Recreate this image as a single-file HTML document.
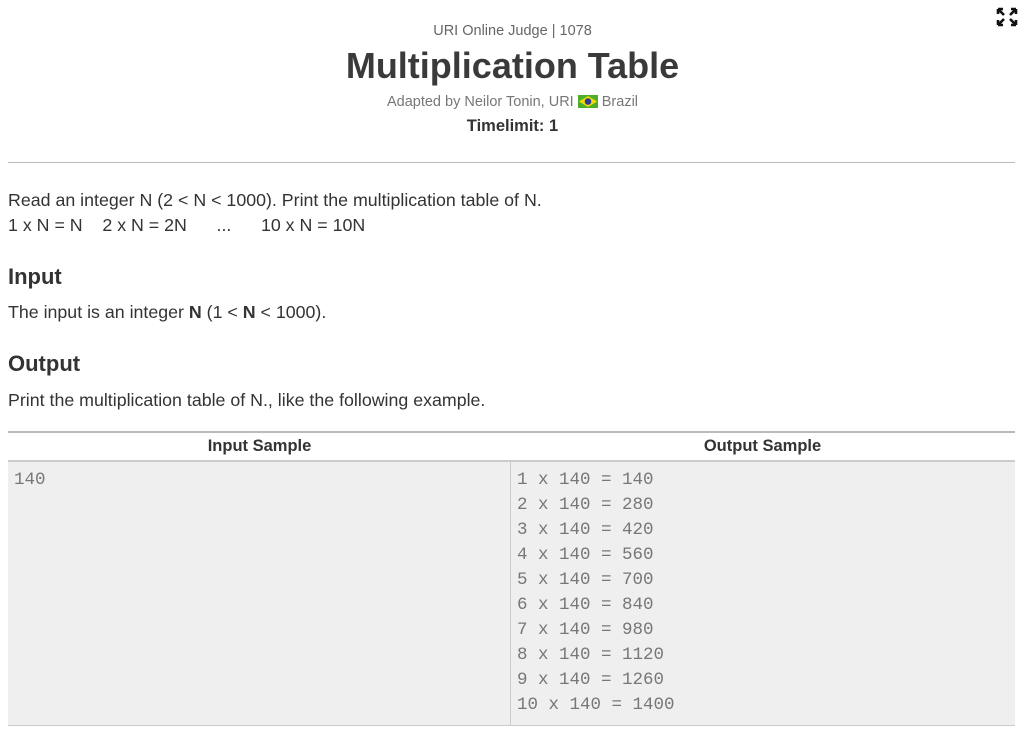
<!DOCTYPE html>
<html><head><meta charset="utf-8"><style>
body{margin:0;background:#fff;font-family:"Liberation Sans",sans-serif;color:#333;width:1025px;height:732px;overflow:hidden;position:relative}
.c{position:absolute;left:0;width:1025px;text-align:center}
.p{position:absolute;left:8px;font-size:17.8px;color:#333;white-space:pre}
h2{position:absolute;left:8px;margin:0;font-size:22px;font-weight:bold;color:#333}
.tbl{position:absolute;left:8px;top:431px;width:1007px;height:292px;border-top:2px solid #bbb;border-bottom:1px solid #ccc}
.hd{height:27px;border-bottom:2px solid #ccc;display:flex;font-weight:bold;font-size:16.5px;line-height:27px}
.hd div{width:503px;text-align:center}
.bd{display:flex;background:#efefef;height:263px}
.bd div{font-family:"Liberation Mono",monospace;font-size:17.5px;line-height:25px;color:#777;padding:6px 6px;white-space:pre;box-sizing:border-box}
</style></head><body>
<div class="c" style="top:23px;font-size:14.5px;color:#666">URI Online Judge | 1078</div>
<div class="c" style="top:45px;font-size:36px;font-weight:bold;color:#3a3a3a">Multiplication Table</div>
<div class="c" style="top:94px;font-size:14.5px;color:#777">Adapted by Neilor Tonin, URI <svg width="20" height="13" style="vertical-align:-2px"><rect width="20" height="13" fill="#4caf27"/><polygon points="10,1 19,6.5 10,12 1,6.5" fill="#f8d80c"/><circle cx="10" cy="6.5" r="3.3" fill="#2b3d8f"/></svg> Brazil</div>
<div class="c" style="top:117px;font-size:16.5px;font-weight:bold;color:#333">Timelimit: 1</div>
<svg style="position:absolute;left:996px;top:7px" width="22" height="20" viewBox="0 0 22 20"><g stroke="#111" stroke-width="2.6" fill="none"><path d="M2 2l6 6M2 2h5M2 2v5"/><path d="M20 2l-6 6M20 2h-5M20 2v5"/><path d="M2 18l6-6M2 18h5M2 18v-5"/><path d="M20 18l-6-6M20 18h-5M20 18v-5"/></g></svg>
<div style="position:absolute;left:8px;top:162px;width:1007px;height:1px;background:#bbb"></div>
<div class="p" style="top:190px">Read an integer N (2 &lt; N &lt; 1000). Print the multiplication table of N.</div>
<div class="p" style="top:215px">1 x N = N    2 x N = 2N      ...      10 x N = 10N</div>
<h2 style="top:264px">Input</h2>
<div class="p" style="top:302px">The input is an integer <b>N</b> (1 &lt; <b>N</b> &lt; 1000).</div>
<h2 style="top:351px">Output</h2>
<div class="p" style="top:390px">Print the multiplication table of N., like the following example.</div>
<div class="tbl">
<div class="hd"><div>Input Sample</div><div>Output Sample</div></div>
<div class="bd"><div style="width:503px;border-right:1px solid #ccc">140</div><div style="width:504px">1 x 140 = 140
2 x 140 = 280
3 x 140 = 420
4 x 140 = 560
5 x 140 = 700
6 x 140 = 840
7 x 140 = 980
8 x 140 = 1120
9 x 140 = 1260
10 x 140 = 1400</div></div>
</div>
</body></html>
